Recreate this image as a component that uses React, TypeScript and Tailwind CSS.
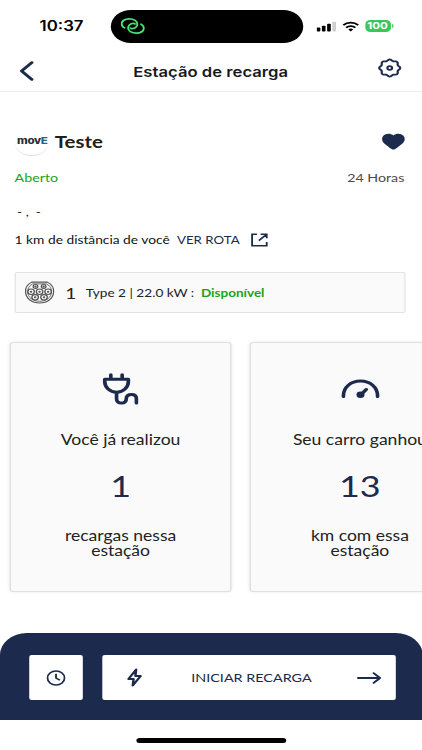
import type { ReactNode } from "react";

const NAVY = "#1c2b4d";

// eight-lobed outline for the settings icon
const GEAR_POINTS = Array.from({ length: 96 }, (_, i) => {
  const angle = (i / 96) * Math.PI * 2;
  const radius = 7.9 + 0.7 * Math.cos(angle * 8);
  return `${(10 + radius * Math.cos(angle)).toFixed(2)},${(10 + radius * Math.sin(angle)).toFixed(2)}`;
}).join(" ");

function StatusBar() {
  return (
    <div className="flex h-[50px] shrink-0 items-start pt-[10px]">
      <span className="w-[91px] pt-[6px] pl-[32.500px] font-['Inter',sans-serif] text-[13.800px] leading-5 font-semibold text-black">
        10:37
      </span>
      <div className="flex h-[32.500px] w-[158px] items-center rounded-full bg-black pl-[7.500px]">
        <svg viewBox="0 0 20 16" className="h-4 w-5" fill="none" stroke="#4be074" strokeWidth="1.600" strokeLinecap="round">
          <path d="M3.300 9.900C1.700 8.900.9 7.400.9 5.700.9 2.900 3.500.9 7 .9c4 0 6.800 2.200 6.800 5.200 0 2.600-1.900 4.500-4.100 4.500-.7 0-1.300-.2-1.700-.6" />
          <path d="M16.700 6.100c1.600 1 2.400 2.500 2.400 4.200 0 2.800-2.600 4.800-6.100 4.800-4 0-6.800-2.200-6.800-5.200 0-2.600 1.900-4.500 4.100-4.500.7 0 1.300.2 1.700.6" />
        </svg>
      </div>
      <div className="flex items-center gap-[5px] pt-[10px] pl-[10.500px]">
        <svg viewBox="0 0 16 11" className="h-[11px] w-4">
          <rect x="0" y="6.500" width="3" height="4" rx=".8" />
          <rect x="4.300" y="4.700" width="3" height="5.800" rx=".8" />
          <rect x="8.600" y="2.800" width="3" height="7.700" rx=".8" />
          <rect x="12.900" y=".8" width="3" height="9.700" rx=".8" fill="#cfcfcf" />
        </svg>
        <svg viewBox="0 0 16 12" className="h-[11px] w-[14px]" fill="none" stroke="#000" strokeWidth="2">
          <path d="M1 4.300a10 10 0 0 1 14 0" />
          <path d="M3.700 7.200a6.200 6.200 0 0 1 8.600 0" />
          <path d="M5.700 9.300a3.400 3.400 0 0 1 4.600 0L8 11.700Z" fill="#000" stroke="none" />
        </svg>
        <div className="flex items-center gap-px">
          <span className="flex h-[12px] w-[21px] items-center justify-center rounded-[4px] bg-[#3bc65a] font-['Inter',sans-serif] text-[9.500px] leading-none font-bold text-white">
            100
          </span>
          <span className="h-1 w-px rounded-r-full bg-[#3bc65a]" />
        </div>
      </div>
    </div>
  );
}

function Header() {
  return (
    <header className="flex h-[41.500px] shrink-0 items-center justify-between border-b border-[#ededed] pr-[16.500px] pl-4">
      <svg viewBox="0 0 12 20" className="mt-[2px] h-5 w-3" fill="none" stroke={NAVY} strokeWidth="2.500" strokeLinecap="round" strokeLinejoin="round">
        <path d="M10.200 1.500 1.700 10l8.500 8.500" />
      </svg>
      <h1 className="pt-[3px] pl-[8px] font-['Inter',sans-serif] text-[13.700px] leading-5 font-semibold text-[#17181c]">
        Estação de recarga
      </h1>
      <svg viewBox="0 0 20 20" className="mb-[4px] h-5 w-5" fill="none" stroke={NAVY} strokeWidth="1.800" strokeLinejoin="round">
        <polygon points={GEAR_POINTS} />
        <circle cx="10" cy="10" r="1.900" />
      </svg>
    </header>
  );
}

function ConnectorIcon() {
  const pins = [
    [9.500, 5.700], [16.500, 5.700],
    [5.700, 11.200], [13, 11.200], [20.300, 11.200],
    [9.200, 17], [16.800, 17],
  ];
  return (
    <svg viewBox="0 0 26 24" className="h-[23px] w-[25px]" fill="none" stroke="#555" strokeWidth="1.100">
      <path d="M6.300 1.200h13.400A12 11.400 0 0 1 25 11.500C25 18 19.600 23 13 23S1 18 1 11.500A12 11.400 0 0 1 6.300 1.200Z" />
      <path d="M7 3h12a10 9.800 0 0 1 4.200 8.500c0 5.400-4.600 9.700-10.200 9.700S2.800 16.900 2.800 11.500A10 9.800 0 0 1 7 3Z" strokeWidth=".8" />
      {pins.map(([cx, cy], i) => (
        <g key={i}>
          <circle cx={cx} cy={cy} r={i < 2 ? 2 : 2.800} />
          <circle cx={cx} cy={cy} r=".5" fill="#555" />
        </g>
      ))}
    </svg>
  );
}

function StationInfo() {
  return (
    <section className="pr-[14px] pl-[12px]">
      <div className="mt-[36px] flex h-[28px] items-center">
        <div className="flex size-[28px] items-center justify-center rounded-full border-b border-[#dedede]">
          <span className="pl-px font-['Inter',sans-serif] text-[9.500px] leading-none font-extrabold tracking-[-0.3px] text-[#2c2d33]">
            mov<span className="text-[#24638f]">E</span>
          </span>
        </div>
        <h2 className="pl-[5px] text-[16.800px] leading-6 font-bold text-[#1d1e20]">Teste</h2>
        <svg viewBox="0 0 20 18" className="ml-auto h-[17.500px] w-[20px]" fill={NAVY}>
          <path d="M10 2.500C7.700-.1 3.400.2 1.500 2.800-.3 5.300.3 8.500 2.300 10.700 4.300 12.900 6.800 15 8.500 16.500q1.500 1.100 3 0c1.700-1.500 4.200-3.600 6.200-5.800 2-2.200 2.600-5.400.8-7.900C16.600.2 12.300-.1 10 2.500Z" />
        </svg>
      </div>
      <div className="mt-[13px] flex h-[18px] items-center justify-between text-[11.700px]">
        <span className="text-[#18a318]">Aberto</span>
        <span className="pr-[0.500px] text-[#4b4b4b]">24 Horas</span>
      </div>
      <p className="mt-[16px] pl-[2px] text-[11.300px] leading-[18px] text-[#222]">-&nbsp;,&nbsp; -</p>
      <div className="mt-[10.500px] flex h-[18px] items-center text-[11.300px]">
        <span className="text-[#111]">1 km de distância de você</span>
        <span className="ml-[6px] text-[10.900px]" style={{ color: NAVY }}>VER ROTA</span>
        <svg viewBox="0 0 14 14" className="ml-[9.500px] size-[14px]" fill="none" stroke={NAVY} strokeWidth="1.500">
          <path d="M5 1.200H1v11.600h12V9M8 1.200h5v4M13 1.200 6.500 7.600" />
        </svg>
      </div>
      <div className="mt-[23px] flex h-[41px] items-center rounded-[2px] border border-[#e2e2e2] bg-[#fafafa] pl-[7px]">
        <ConnectorIcon />
        <span className="pl-[8.500px] text-[15.500px] leading-5 text-[#222]">1</span>
        <span className="pl-[8px] text-[11.200px] leading-5 text-[#222]">Type 2 | 22.0 kW :</span>
        <span className="pl-[5.500px] text-[11.100px] leading-5 font-bold text-[#18a318]">Disponível</span>
      </div>
    </section>
  );
}

type StatCardProps = {
  icon: ReactNode;
  title: string;
  value: number;
  lines: [string, string];
};

function StatCard({ icon, title, value, lines }: StatCardProps) {
  return (
    <div className="flex h-[250px] w-[182px] shrink-0 flex-col items-center rounded-[3px] border border-[#dfdfdf] bg-[#fafafa] shadow-[0_0_3px_rgba(0,0,0,0.08)]">
      <div className="mt-[28px] flex h-[35px] items-center justify-center">{icon}</div>
      <p className="mt-[24px] text-[14.400px] leading-[20px] text-[#222]">{title}</p>
      <p className="mt-[16px] text-[29.500px] leading-[40px] text-[#1c2b4d]">{value}</p>
      <p className="mt-[23px] text-center text-[14.400px] leading-[14.500px] text-[#222]">
        {lines[0]}
        <br />
        {lines[1]}
      </p>
    </div>
  );
}

function PlugIcon() {
  return (
    <svg viewBox="0 0 30 34" className="h-[34px] w-[30px]" fill="none" stroke={NAVY} strokeWidth="3" strokeLinecap="round" strokeLinejoin="round">
      <path d="M2 7.300h19.400v2.200c0 6-4.100 10.700-9.700 10.700S2 15.500 2 9.500ZM7 7V2.800M16.300 7V2.800" />
      <path d="M11.700 20.500v6.300c0 2.700 1.500 4.300 4 4.300s4-1.600 4-4.300c0-2.700 1.500-4.300 4.300-4.300s4 1.600 4 4.300v4.300" />
    </svg>
  );
}

function GaugeIcon() {
  return (
    <svg viewBox="0 0 32 20" className="h-5 w-8" fill="none" stroke={NAVY} strokeWidth="3" strokeLinecap="round">
      <path d="M2 17.500v-1C2 8.300 8 2 16 2s14 6.300 14 14.500v1" />
      <path d="M16 16l4.700-5.500" />
      <circle cx="16" cy="15.800" r="1.800" fill={NAVY} />
    </svg>
  );
}

function Footer() {
  return (
    <footer className="mt-[41px] flex h-[87px] shrink-0 gap-[16px] rounded-t-[22px] bg-[#1c2b4d] pt-[22px] pr-[22px] pl-[24px]">
      <button className="flex h-[45px] w-[43.500px] items-center justify-center rounded-[2px] bg-white">
        <svg viewBox="0 0 16 16" className="size-4" fill="none" stroke={NAVY} strokeWidth="1.500">
          <circle cx="8" cy="8" r="7" />
          <path d="M8 3.800V8l3.200 2.200" />
        </svg>
      </button>
      <button className="flex h-[45px] flex-1 items-center justify-between rounded-[2px] bg-white pr-[12px] pl-[20px] text-[#1c2b4d]">
        <svg viewBox="0 0 13 19" className="h-[19px] w-[13px]" fill="none" stroke={NAVY} strokeWidth="2" strokeLinejoin="round">
          <path d="M7.800 1.500 1.500 11h4.200L5 17.500 11.500 8H7.200Z" />
        </svg>
        <span className="pl-[4px] text-[11.800px] leading-5">INICIAR RECARGA</span>
        <svg viewBox="0 0 20 12" className="h-3 w-5" fill="none" stroke={NAVY} strokeWidth="1.800" strokeLinecap="round" strokeLinejoin="round">
          <path d="M1 6h18M13.800 1.200 19 6l-5.200 4.800" />
        </svg>
      </button>
    </footer>
  );
}

export default function App() {
  return (
    <div className="h-[750px] w-[422px] overflow-hidden bg-white">
      <div className="flex h-[750px] w-[346.500px] origin-top-left scale-x-[1.2179] flex-col overflow-hidden bg-white font-['Lato',sans-serif]">
        <StatusBar />
        <Header />
        <StationInfo />
        <div className="mt-[29px] ml-[8px] flex gap-[14.500px]">
          <StatCard icon={<PlugIcon />} title="Você já realizou" value={1} lines={["recargas nessa", "estação"]} />
          <StatCard icon={<GaugeIcon />} title="Seu carro ganhou" value={13} lines={["km com essa", "estação"]} />
        </div>
        <Footer />
        <div className="mx-auto mt-[18px] h-[4.500px] w-[123px] shrink-0 rounded-full bg-black" />
      </div>
    </div>
  );
}
